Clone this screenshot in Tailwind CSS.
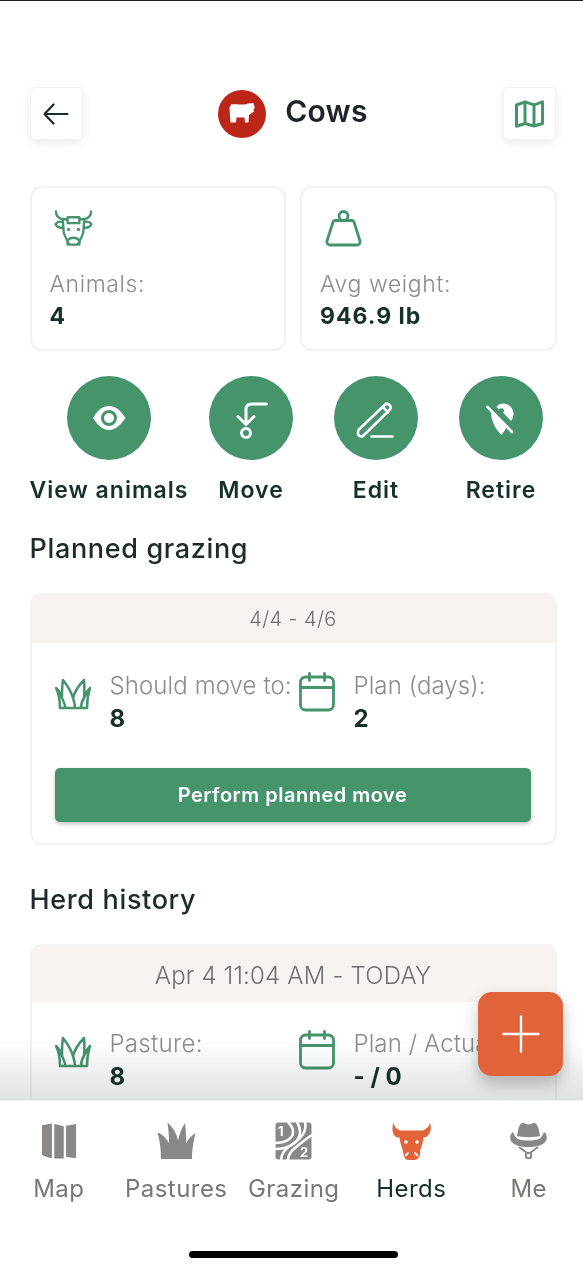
<!DOCTYPE html>
<html lang="en">
<head>
  <meta charset="UTF-8" />
  <meta name="viewport" content="width=device-width, initial-scale=1.0"/>
  <title>Cows</title>
  <script src="https://cdn.jsdelivr.net/npm/@tailwindcss/browser@4"></script>
</head>
<body class="bg-white font-['Inter',sans-serif]">
  <div class="relative w-[583px] h-[1270px] overflow-hidden flex flex-col border-t border-[#222]">

    <!-- Scrolling content -->
    <div class="relative h-[1099px] overflow-hidden pl-[29.5px] pr-[26.5px] pt-[86px]">

      <!-- Header -->
      <div class="relative flex justify-between items-center h-[53px]">
        <button class="w-[53px] h-[53px] rounded-[5px] bg-white border border-[#f2f2f2] shadow-[0_3px_10px_rgba(0,0,0,0.08)] flex items-center justify-center">
          <svg width="26" height="22" viewBox="0 0 26 22" fill="none" stroke="#16302b" stroke-width="2.200" stroke-linecap="round" stroke-linejoin="round"><path d="M24.500 11H1.500M10.500 1.500L1.500 11L10.500 20.500"/></svg>
        </button>
        <div class="flex items-center gap-[19px]">
          <svg width="48" height="48" viewBox="0 0 48 48"><circle cx="24" cy="24" r="24" fill="#bb2618"/><path fill="#fff" d="M13 14.500C17 13.500 24 15 27.500 14.500L30 13.500L35.500 13L36 15.500L37 17.500L35.500 19L36 21.500L33 23.500L31 25L30.500 32.500L27 32.500L26.500 27.500L18.500 27.500L18 32.500L12.500 32.500L12 27L11.500 17.500Z"/></svg>
          <h1 class="text-[30px] leading-[36px] font-semibold text-[#1d2327] -mt-[6px] tracking-[0.2px]">Cows</h1>
        </div>
        <button class="w-[53px] h-[53px] rounded-[5px] bg-white border border-[#f2f2f2] shadow-[0_3px_10px_rgba(0,0,0,0.08)] flex items-center justify-center">
          <svg width="29" height="28" viewBox="0 0 29 28" fill="none" stroke="#45946c" stroke-width="3" stroke-linejoin="round"><path d="M1.500 5L10 1.800L19 4.800L27.500 1.800V23.500L19 26L10 23.500L1.500 26.200ZM10 1.800V23.500M19 4.800V26"/></svg>
        </button>
      </div>

      <!-- Stats -->
      <div class="grid grid-cols-2 gap-[14px] mt-[46px]">
        <div class="h-[165px] rounded-[12px] border-2 border-[#f2f2f2] px-[18px] pt-[22px]">
          <svg class="ml-[4px]" width="39" height="37" viewBox="0 0 40 37" fill="none" stroke="#45946c" stroke-width="2.400" stroke-linecap="round" stroke-linejoin="round"><path d="M2 1C2 5 5 8 9 9L14 9V7H26V9L31 9C35 8 38 5 38 1M14 9V13H26V9M9 9L10 23C12 28 14 33 16 35H24C26 33 28 28 30 23L31 9M9 12C6 11 3 12 1.500 14C3 17 6 18 9.500 18M31 12C34 11 37 12 38.500 14C37 17 34 18 30.500 18M14 35C13 31 15 28 20 28C25 28 27 31 26 35"/><circle cx="15" cy="19.500" r=".6" fill="#45946c"/><circle cx="25" cy="19.500" r=".6" fill="#45946c"/></svg>
          <p class="mt-[23px] text-[23px] leading-[28px] font-light tracking-[0.6px] text-[#8c8c8c]">Animals:</p>
          <p class="mt-[4px] text-[23px] leading-[28px] font-bold tracking-[1px] text-[#16302b]">4</p>
        </div>
        <div class="h-[165px] rounded-[12px] border-2 border-[#f2f2f2] px-[18px] pt-[22px]">
          <svg class="ml-[5px]" width="37" height="37" viewBox="0 0 37 37" fill="none" stroke="#45946c" stroke-width="2.800" stroke-linecap="round" stroke-linejoin="round"><circle cx="18.500" cy="6" r="4.500"/><path d="M10 10.500H27C28 10.500 28.500 11 29 12L35 31C35.500 33.500 34 35 32 35H5C3 35 1.500 33.500 2 31L8 12C8.500 11 9 10.500 10 10.500Z"/></svg>
          <p class="mt-[23px] text-[23px] leading-[28px] font-light tracking-[0.6px] text-[#8c8c8c]">Avg weight:</p>
          <p class="mt-[4px] text-[23px] leading-[28px] font-bold tracking-[1px] text-[#16302b]">946.9 lb</p>
        </div>
      </div>

      <!-- Actions -->
      <div class="relative h-[130px] mt-[25px] flex text-[23px] leading-[28px] font-semibold tracking-[1px] text-[#16302b]">
        <div class="w-[159px] shrink-0 flex flex-col items-center gap-[16px]">
          <svg width="84" height="84" viewBox="0 0 84 84"><circle cx="42" cy="42" r="42" fill="#45946c"/><path fill="#fff" d="M26 44C31 35.500 36 32 42 32C48 32 53 35.500 58.500 44C53 52 48 56 42 56C36 56 31 52 26 44Z" transform="translate(0 -2)"/><circle cx="42" cy="42" r="6.500" fill="none" stroke="#45946c" stroke-width="3"/></svg>
          <span class="whitespace-nowrap">View animals</span>
        </div>
        <div class="w-[125px] shrink-0 flex flex-col items-center gap-[16px]">
          <svg width="84" height="84" viewBox="0 0 84 84" fill="none" stroke="#fff" stroke-width="3" stroke-linecap="round" stroke-linejoin="round"><circle cx="42" cy="42" r="42" fill="#45946c" stroke="none"/><path d="M57.500 28H43C39 28 37 30 37 33V48M29 40.500L37 48.500L45 40.500"/><circle cx="37" cy="57" r="4.500"/></svg>
          <span>Move</span>
        </div>
        <div class="w-[125px] shrink-0 flex flex-col items-center gap-[16px]">
          <svg width="84" height="84" viewBox="0 0 84 84" fill="none" stroke="#fff" stroke-width="2.600" stroke-linecap="round" stroke-linejoin="round"><circle cx="42" cy="42" r="42" fill="#45946c" stroke="none"/><path d="M24.500 54L50.500 29C52 27.500 54 27.500 55.500 29C57 30.500 57 32.500 55.500 34L29 60C27 61 24 60 24 57.500C24 56 24 55 24.500 54ZM49 31L54 36.500M37.500 60.500H58.500"/></svg>
          <span>Edit</span>
        </div>
        <div class="w-[125px] shrink-0 flex flex-col items-center gap-[16px]">
          <svg width="84" height="84" viewBox="0 0 84 84" fill="none"><circle cx="42" cy="42" r="42" fill="#45946c"/><path fill="#fff" d="M41 28C47 26 54 30 54.500 37C54.700 40 53.500 43 52 45L44 36.500C45.500 35.500 45.500 33 43.500 32.500C42 32 41 32.500 40 33.500L37.500 31C38.500 29.500 39.500 28.500 41 28ZM32 36L47.500 51.500C46 54 44.500 56.500 42.500 59C37.500 54 32 46 32 36Z"/><path d="M28.500 31L53 56" stroke="#fff" stroke-width="2.600" stroke-linecap="round"/></svg>
          <span>Retire</span>
        </div>
      </div>

      <!-- Planned grazing -->
      <h2 class="mt-[27px] text-[27px] leading-[32px] font-medium tracking-[0.65px] text-[#1d2b2a]">Planned grazing</h2>
      <div class="mt-[28px] h-[252px] rounded-[12px] border-2 border-[#f2f2f2] overflow-hidden">
        <div class="h-[48px] bg-[#f7f3f0] flex items-center justify-center text-[20px] font-light tracking-[0.4px] text-[#6f6f6f]">4/4 - 4/6</div>
        <div class="flex pt-[27px] pl-[23px] h-[125px]">
          <svg class="mt-[8px]" width="36" height="32" viewBox="0 0 36 32" fill="none" stroke="#45946c" stroke-width="2.500" stroke-linejoin="round"><path d="M5 30C5 23 4 16 1 10C4 13 6 16 7 20C7 14 7 7 8 2C12 7 16 13 18 20C20 13 24 7 29 2C29.500 8 29.500 14 29 20C30.500 16 32 13 35 10C33 16 32 23 32 30ZM7 20C8.500 23 10 27 10.500 30M18 20C19 23 20 27 20 30M29 20C27 23 26 27 26 30"/></svg>
          <div class="ml-[19px] w-[189px] whitespace-nowrap">
            <p class="text-[24px] leading-[32px] font-light text-[#8c8c8c] tracking-[0.1px]">Should move to:</p>
            <p class="text-[24px] leading-[28px] mt-[3px] font-bold text-[#16302b]">8</p>
          </div>
          <svg class="mt-[2px]" width="36" height="40" viewBox="0 0 36 40" fill="none" stroke="#45946c" stroke-width="2.800" stroke-linecap="round" stroke-linejoin="round"><rect x="1.500" y="5" width="33" height="33" rx="5"/><path d="M1.500 15.500H34.500M10.500 1.500V8.500M25.500 1.500V8.500"/></svg>
          <div class="ml-[19px] whitespace-nowrap">
            <p class="text-[24px] leading-[32px] font-light text-[#8c8c8c] tracking-[0.1px]">Plan (days):</p>
            <p class="text-[24px] leading-[28px] mt-[3px] font-bold text-[#16302b]">2</p>
          </div>
        </div>
        <button class="block mx-[23px] w-[476px] h-[54px] rounded-[5px] bg-[#45946c] shadow-[0_2px_4px_rgba(0,0,0,0.25)] text-white text-[20px] font-semibold tracking-[0.5px]">Perform planned move</button>
      </div>

      <!-- Herd history -->
      <h2 class="mt-[39px] text-[27px] leading-[32px] font-medium tracking-[0.65px] text-[#1d2b2a]">Herd history</h2>
      <div class="mt-[28px] h-[300px] rounded-[12px] border-2 border-[#f2f2f2] overflow-hidden">
        <div class="h-[56px] pt-[3px] bg-[#f7f3f0] flex items-center justify-center text-[24px] font-light tracking-[0.2px] text-[#6f6f6f]">Apr 4 11:04 AM - TODAY</div>
        <div class="flex pt-[26px] pl-[23px]">
          <svg class="mt-[8px]" width="36" height="32" viewBox="0 0 36 32" fill="none" stroke="#45946c" stroke-width="2.500" stroke-linejoin="round"><path d="M5 30C5 23 4 16 1 10C4 13 6 16 7 20C7 14 7 7 8 2C12 7 16 13 18 20C20 13 24 7 29 2C29.500 8 29.500 14 29 20C30.500 16 32 13 35 10C33 16 32 23 32 30ZM7 20C8.500 23 10 27 10.500 30M18 20C19 23 20 27 20 30M29 20C27 23 26 27 26 30"/></svg>
          <div class="ml-[19px] w-[189px] whitespace-nowrap">
            <p class="text-[24px] leading-[32px] font-light text-[#8c8c8c] tracking-[0.3px]">Pasture:</p>
            <p class="text-[24px] leading-[28px] mt-[3px] font-bold text-[#16302b]">8</p>
          </div>
          <svg class="mt-[2px]" width="36" height="40" viewBox="0 0 36 40" fill="none" stroke="#45946c" stroke-width="2.800" stroke-linecap="round" stroke-linejoin="round"><rect x="1.500" y="5" width="33" height="33" rx="5"/><path d="M1.500 15.500H34.500M10.500 1.500V8.500M25.500 1.500V8.500"/></svg>
          <div class="ml-[19px] whitespace-nowrap">
            <p class="text-[24px] leading-[32px] font-light text-[#8c8c8c] tracking-[0.1px]">Plan / Actual:</p>
            <p class="text-[24px] leading-[28px] mt-[3px] font-bold text-[#16302b]">- / 0</p>
          </div>
        </div>
      </div>

      <!-- Fade above the tab bar -->
      <div class="absolute left-0 right-0 bottom-0 h-[60px] bg-gradient-to-b from-transparent to-[#dfe2e2] mix-blend-multiply"></div>

      <!-- Add button -->
      <button class="absolute left-[478px] top-[991px] w-[85px] h-[84px] rounded-[14px] bg-[#e0633a] shadow-[0_8px_16px_rgba(0,0,0,0.25)] flex items-center justify-center">
        <svg width="38" height="38" viewBox="0 0 38 38" stroke="#fff" stroke-width="2.400" stroke-linecap="round"><path d="M19 1.500V36.500M1.500 19H36.500"/></svg>
      </button>
    </div>

    <!-- Tab bar -->
    <nav class="flex-1 bg-white border-t border-[#f2f2f2]">
      <div class="grid grid-cols-[repeat(5,117.5px)] pt-[21px] text-[24px] leading-[30px] tracking-[0.45px] text-[#7a7673]">
        <div class="flex flex-col items-center gap-[14px]">
          <svg width="36" height="38" viewBox="0 0 38 38" fill="#8a8887"><path d="M1 2.500L11.500 0.500V37.500L2.500 34.500C1.500 34 1 33.500 1 32.500ZM14 1L24 3.500V37.500L14 37.500ZM26.500 3L37 1V35.500C37 36.500 36.500 37.200 35.500 37L26.500 36Z"/></svg>
          <span>Map</span>
        </div>
        <div class="flex flex-col items-center gap-[14px]">
          <svg width="39" height="38" viewBox="0 0 39 38" fill="#8a8887"><path d="M4 37H35C35 31 35.500 23 38.500 11C34 14 31.500 17 29 21C29 14 29 8 28 1C24.500 6 22.500 12 21 18.500C19.500 11 16 5 10.500 0.500C11.500 8 12 15 12 21C9 16 6 12.500 0.500 10.500C3 19 4 28 4 37Z"/></svg>
          <span>Pastures</span>
        </div>
        <div class="flex flex-col items-center gap-[14px]">
          <svg width="37" height="38" viewBox="0 0 37 38"><rect x="0.500" y="0.500" width="36" height="37" rx="3" fill="#8a8887"/><path d="M0 21C10 21 18 17 18 10C18 6 16 3 13 0M0 27C13 27 25 21 25 10C25 6 24 3 22 0M30 0C32 8 28 15 19 21C11 26 6 31 6 38M37 13C32 16 26 21 20 26C15 30 13 34 13 38" fill="none" stroke="#fff" stroke-width="2.600"/><text x="3" y="14" font-size="13" font-weight="700" fill="#fff" font-family="Inter">1</text><text x="25" y="35" font-size="13" font-weight="700" fill="#fff" font-family="Inter">2</text></svg>
          <span>Grazing</span>
        </div>
        <div class="flex flex-col items-center gap-[14px] text-[#16302b]">
          <svg width="39" height="38" viewBox="0 0 39 38"><path fill="#e0633a" d="M1.500 0.500C2 4 4 7 8 8.500H31C35 7 37.500 4 38 0.500C39.500 5 39 10 36 13.500C34.500 15 33 15.500 31.500 15.500C31 20 29.500 25 28 29L28 33C27 36 25 38 22 38H17C14 38 12 36 11.500 33L11 29C9.500 25 8 20 7.500 15.500C6 15.500 3.500 15.500 2 13C0 10 0 5 1.500 0.500Z"/><circle cx="14" cy="20" r="1.800" fill="#fff"/><circle cx="25" cy="20" r="1.800" fill="#fff"/><path d="M12.500 34.500C13 32 14.500 30.500 17 30C16.500 32.500 15.500 34 12.500 34.500ZM26.500 34.500C26 32 24.500 30.500 22 30C22.500 32.500 23.500 34 26.500 34.500Z" fill="#fff"/></svg>
          <span>Herds</span>
        </div>
        <div class="flex flex-col items-center gap-[14px]">
          <svg width="37" height="38" viewBox="0 0 37 38" fill="#8a8887"><path d="M7 14C8 8 9 1 13 1C15 1 16 2.500 18.500 2.500C21 2.500 22 1 24 1C28 1 29 8 30 14C25 15.500 12 15.500 7 14Z"/><path d="M3 10C4 13 6 16 8 17C14 19 23 19 29 17C31 16 33 13 34 10C37 12 37.500 16 36 19C33 23.500 26 25 18.500 25C11 25 4 23.500 1 19C-0.500 16 0 12 3 10Z"/><path d="M9 25L17 31M28 25L20 31" fill="none" stroke="#8a8887" stroke-width="2"/><circle cx="18.500" cy="33.500" r="2.800" fill="none" stroke="#8a8887" stroke-width="2"/></svg>
          <span>Me</span>
        </div>
      </div>
      <div class="mt-[47px] w-[209px] h-[7px] rounded-full bg-black ml-[189px]"></div>
    </nav>
  </div>
</body>
</html>
